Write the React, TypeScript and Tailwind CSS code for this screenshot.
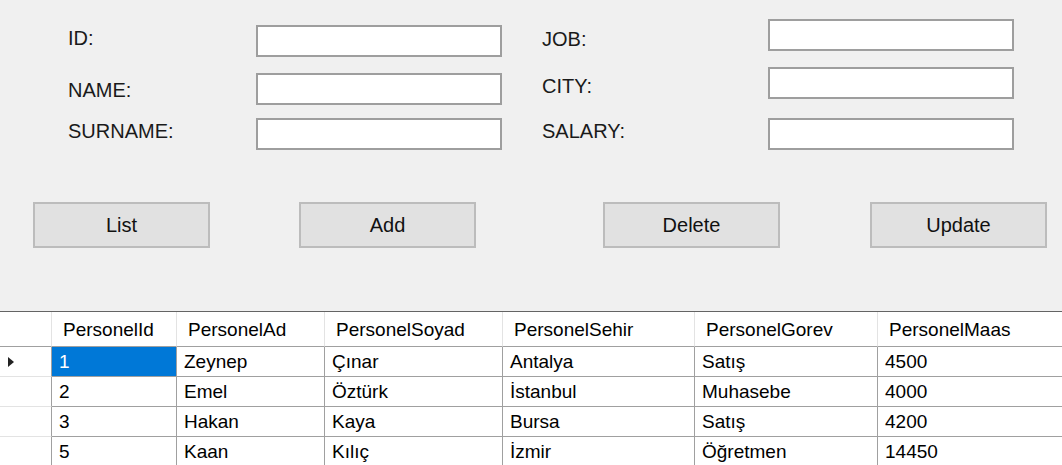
const leftFields = [
  { label: 'ID:', rowMt: 'mt-0', labelMt: 'mt-[1px]' },
  { label: 'NAME:', rowMt: 'mt-[16px]', labelMt: 'mt-[5px]' },
  { label: 'SURNAME:', rowMt: 'mt-[13px]', labelMt: 'mt-[1px]' },
];

const rightFields = [
  { label: 'JOB:', rowMt: 'mt-0', labelMt: 'mt-[8px]' },
  { label: 'CITY:', rowMt: 'mt-[16px]', labelMt: 'mt-[7px]' },
  { label: 'SALARY:', rowMt: 'mt-[19px]', labelMt: 'mt-[1px]' },
];

const columns = ['PersonelId', 'PersonelAd', 'PersonelSoyad', 'PersonelSehir', 'PersonelGorev', 'PersonelMaas'];

const rows = [
  ['1', 'Zeynep', 'Çınar', 'Antalya', 'Satış', '4500'],
  ['2', 'Emel', 'Öztürk', 'İstanbul', 'Muhasebe', '4000'],
  ['3', 'Hakan', 'Kaya', 'Bursa', 'Satış', '4200'],
  ['5', 'Kaan', 'Kılıç', 'İzmir', 'Öğretmen', '14450'],
];

const TextBox = () => (
  <input
    type="text"
    className="w-[246px] h-[32px] bg-white border-2 border-[#9e9e9e] outline-none"
  />
);

const Button = ({ text }: { text: string }) => (
  <button className="w-[177px] h-[46px] bg-[#e1e1e1] border-2 border-[#bcbcbc] text-[20px] text-[#111] leading-none">
    {text}
  </button>
);

export default function App() {
  return (
    <div className="w-[1062px] h-[465px] overflow-hidden bg-[#f0f0f0] flex flex-col font-['Liberation_Sans',Arial,sans-serif] text-black">
      {/* form */}
      <div className="h-[202px] shrink-0 flex items-start">
        <div className="ml-[68px] mt-[25px] flex flex-col">
          {leftFields.map((f) => (
            <div key={f.label} className={`flex items-start ${f.rowMt}`}>
              <span className={`w-[188px] text-[20px] leading-[24px] text-[#1a1a1a] ${f.labelMt}`}>{f.label}</span>
              <TextBox />
            </div>
          ))}
        </div>
        <div className="ml-[40px] mt-[19px] flex flex-col">
          {rightFields.map((f) => (
            <div key={f.label} className={`flex items-start ${f.rowMt}`}>
              <span className={`w-[226px] text-[20px] leading-[24px] text-[#1a1a1a] ${f.labelMt}`}>{f.label}</span>
              <TextBox />
            </div>
          ))}
        </div>
      </div>

      {/* buttons */}
      <div className="flex shrink-0 pl-[33px]">
        <Button text="List" />
        <div className="ml-[89px]">
          <Button text="Add" />
        </div>
        <div className="ml-[127px]">
          <Button text="Delete" />
        </div>
        <div className="ml-[90px]">
          <Button text="Update" />
        </div>
      </div>

      {/* grid */}
      <div className="mt-[63px] shrink-0 bg-white border-t border-[#646464] text-[19px] leading-none">
        <div className="grid grid-cols-[52px_125px_148px_178px_192px_183px_184px] h-[35px]">
          <div className="border-r border-[#e3e3e3] border-b border-b-[#a0a0a0]" />
          {columns.map((c, j) => (
            <div
              key={c}
              className={`flex items-center pl-[11px] border-b border-b-[#a0a0a0] ${
                j < columns.length - 1 ? 'border-r border-r-[#e3e3e3]' : ''
              }`}
            >
              {c}
            </div>
          ))}
        </div>
        {rows.map((r, i) => (
          <div key={i} className="grid grid-cols-[52px_125px_148px_178px_192px_183px_184px] h-[30px]">
            <div className="flex items-center pl-[8px] border-r border-r-[#a0a0a0] border-b border-b-[#e3e3e3]">
              {i === 0 && (
                <svg width="6" height="10" viewBox="0 0 6 10">
                  <path d="M0 0 L6 5 L0 10 Z" fill="#222" />
                </svg>
              )}
            </div>
            {r.map((v, j) => (
              <div
                key={j}
                className={`flex items-center pl-[7px] border-b border-b-[#a0a0a0] ${
                  j < r.length - 1 ? 'border-r border-r-[#a0a0a0]' : ''
                } ${i === 0 && j === 0 ? 'bg-[#0078d7] text-white' : ''}`}
              >
                {v}
              </div>
            ))}
          </div>
        ))}
      </div>
    </div>
  );
}
